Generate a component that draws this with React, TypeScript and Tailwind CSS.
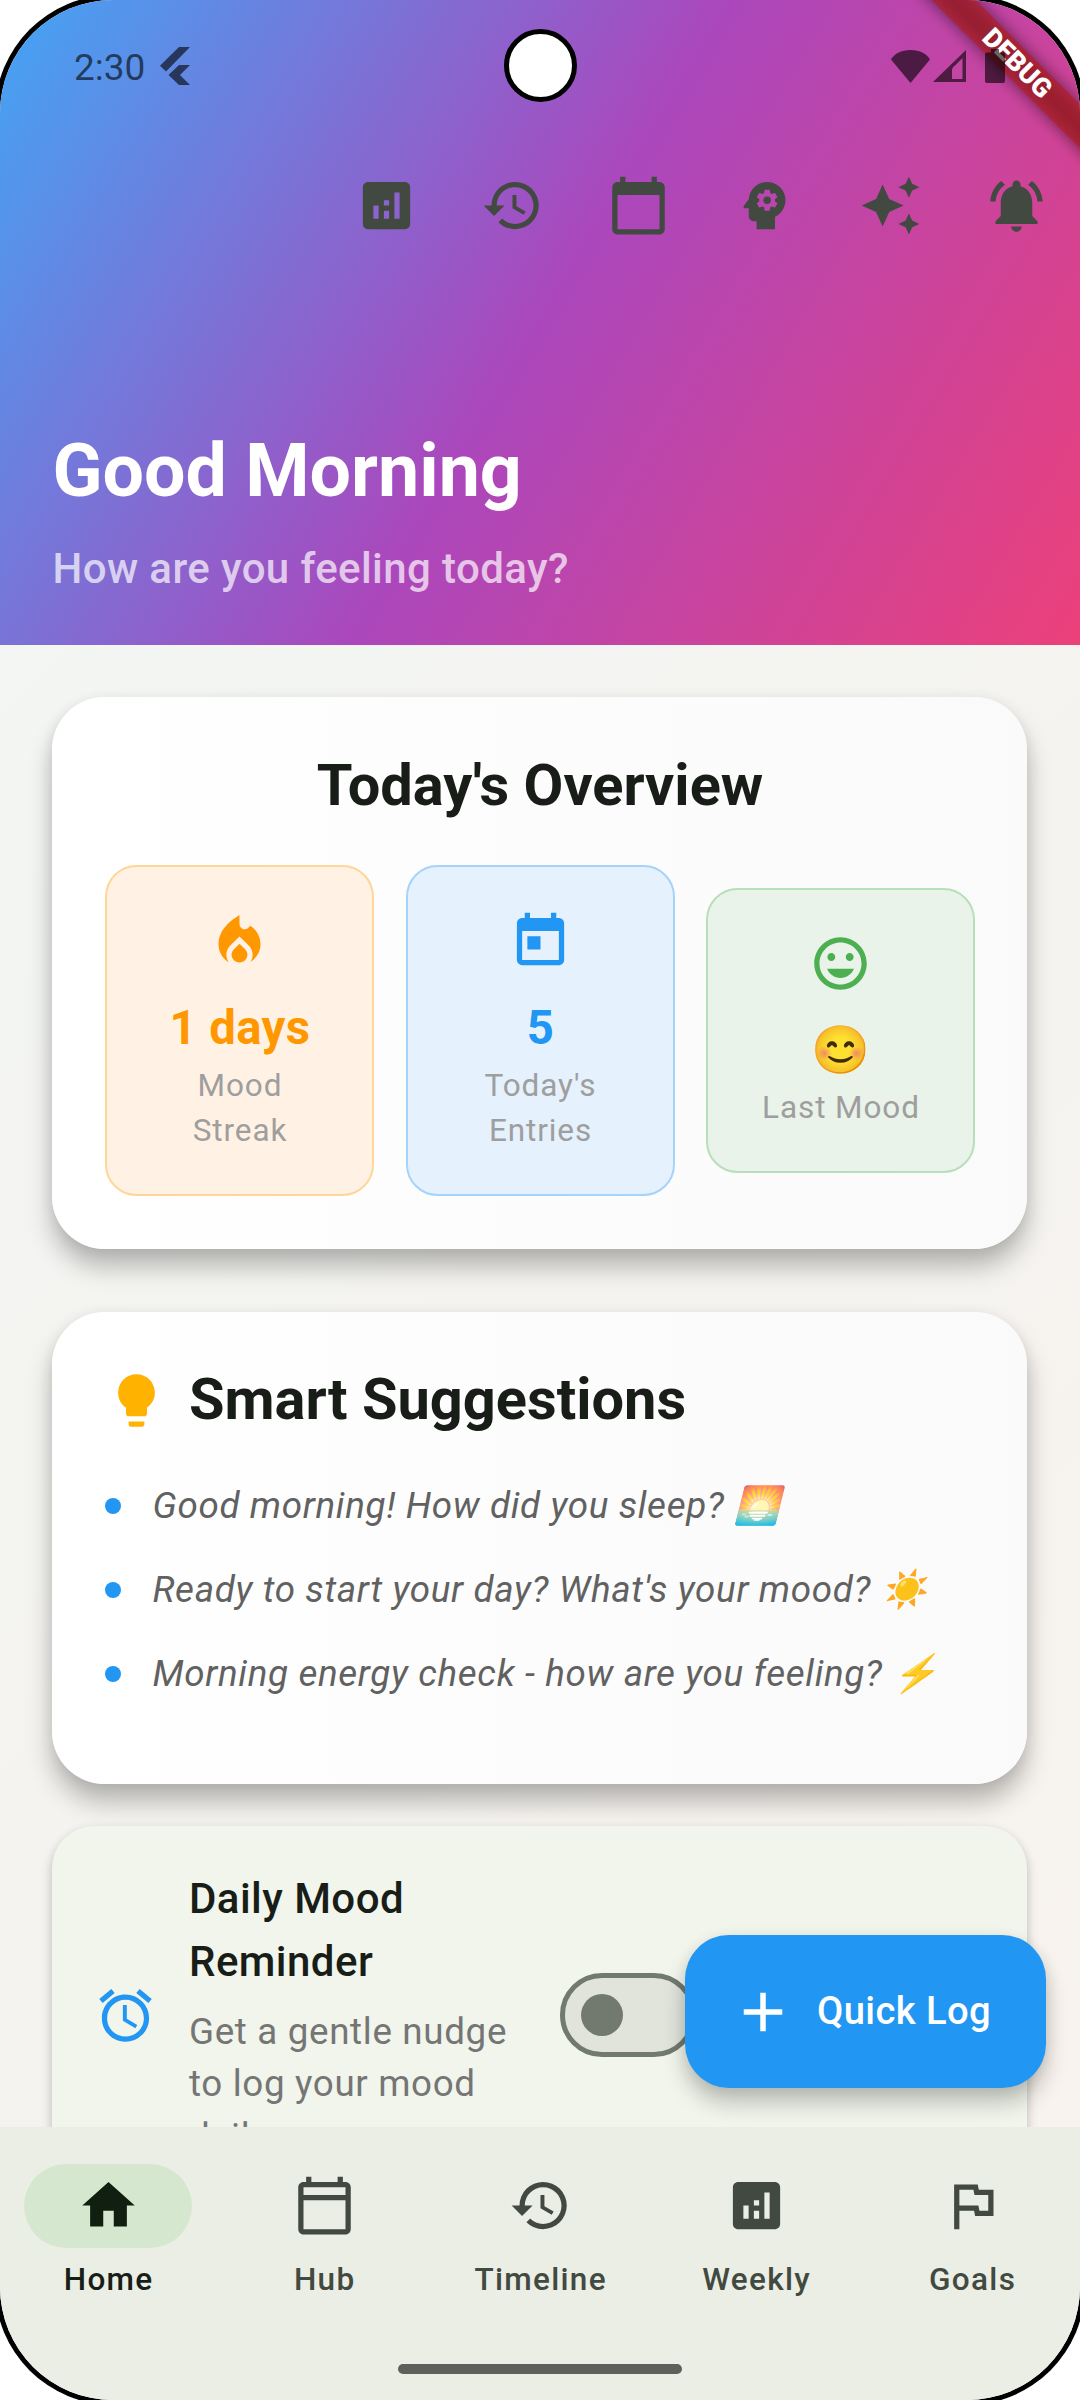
import React from "react";
import {
  MdAdd,
  MdAlarm,
  MdAnalytics,
  MdAutoAwesome,
  MdCalendarToday,
  MdHistory,
  MdHome,
  MdLightbulb,
  MdLocalFireDepartment,
  MdMood,
  MdNotificationsActive,
  MdOutlineCalendarToday,
  MdOutlineFlag,
  MdPsychology,
  MdToday,
} from "react-icons/md";

function StatusBar() {
  return (
    <div className="relative z-20 flex h-[132px] items-center pr-[75px] pl-[74px] text-black/60">
      <span className="pt-[2px] text-[37px] leading-none">2:30</span>
      <svg className="ml-[15px] h-[38px] w-[30px]" viewBox="0 0 30 38" fill="currentColor">
        <path d="M19 0h11L6 24.5 0 18.8z" />
        <path d="M19 18h11l-10 10 10 10H19L8.500 28z" />
      </svg>
      <svg className="ml-auto h-[33px] w-[39px]" viewBox="0 0 39 33" fill="currentColor">
        <path d="M19.500 33L0 9.500C3 4 10 0 19.500 0S36 4 39 9.500z" />
      </svg>
      <svg className="ml-[3px] h-[32px] w-[33px]" viewBox="0 0 33 32" fill="currentColor" fillRule="evenodd">
        <path d="M33 0v32H0zM29.500 8L22 15.500c-2 1.500-3 2.500-3 5V29h10.500z" />
      </svg>
      <svg className="ml-[19px] h-[34px] w-[20px]" viewBox="0 0 20 34" fill="currentColor">
        <path d="M6 0h8v3.500h4a2 2 0 0 1 2 2V32a2 2 0 0 1-2 2H2a2 2 0 0 1-2-2V5.500a2 2 0 0 1 2-2h4z" />
      </svg>
    </div>
  );
}

function DebugBanner() {
  return (
    <div className="absolute top-0 right-0 z-10 h-[210px] w-[210px] overflow-hidden">
      <div className="absolute top-[47.500px] left-[17px] h-[31px] w-[260px] rotate-45 bg-black/50 blur-[8px]" />
      <div className="absolute top-[47.500px] left-[17px] flex h-[31px] w-[260px] rotate-45 items-center justify-center bg-[#b71c1c]/[0.63] text-[26.800px] leading-none font-black text-white">
        DEBUG
      </div>
    </div>
  );
}

const actions = [MdAnalytics, MdHistory, MdCalendarToday, MdPsychology, MdAutoAwesome, MdNotificationsActive];

function Header() {
  return (
    <header className="relative flex h-[645px] shrink-0 flex-col bg-[linear-gradient(120.85deg,#42a5f5_0%,#ab47bc_50%,#ec407a_100%)]">
      <DebugBanner />
      <StatusBar />
      <div className="absolute top-[29px] left-[503.500px] z-20 h-[73px] w-[73px] rounded-full border-[5px] border-black bg-white" />
      <div className="flex h-[147px] items-center justify-end pr-[0.500px] text-[63px] text-[#424940]">
        {actions.map((Icon, i) => (
          <div key={i} className="flex w-[126px] justify-center">
            <Icon />
          </div>
        ))}
      </div>
      <div className="flex flex-1 flex-col justify-end gap-[26px] pb-[46px] pl-[52.500px]">
        <h1 className="text-[73.500px] leading-[84px] font-bold text-white">Good Morning</h1>
        <p className="text-[42px] leading-[60px] font-medium tracking-[0.4px] text-white/70">How are you feeling today?</p>
      </div>
    </header>
  );
}

type StatProps = { icon: React.ReactNode; value: string; label: React.ReactNode; tone: string };

function Stat({ icon, value, label, tone }: StatProps) {
  return (
    <div className={`flex flex-1 flex-col items-center rounded-[31.500px] border-[2.625px] pt-[42.500px] pb-[41px] ${tone}`}>
      <div className="text-[63px]">{icon}</div>
      <div className="mt-[22px] pl-[1px] text-[47.250px] leading-[67.500px] font-bold tracking-[0.400px] whitespace-nowrap">{value}</div>
      <div className="mt-[0.500px] pl-[1px] text-center text-[31.500px] leading-[45px] tracking-[0.900px] whitespace-nowrap text-[#9e9e9e]">{label}</div>
    </div>
  );
}

const cardClass =
  "shrink-0 rounded-[52.500px] bg-linear-to-r from-white to-[#fafafa] pr-[52px] pl-[53px] shadow-[0_18px_24px_rgba(0,0,0,0.25),0_2px_14px_rgba(0,0,0,0.07)]";

function Overview() {
  return (
    <section className={`mt-[52px] h-[552px] pt-[51.500px] ${cardClass}`}>
      <h2 className="text-center text-[57.750px] leading-[72px] font-bold text-[#181d18]">Today's Overview</h2>
      <div className="mt-[44.500px] flex items-center gap-[31.500px]">
        <Stat
          icon={<MdLocalFireDepartment />}
          value="1 days"
          label={<>Mood<br />Streak</>}
          tone="border-[#ffd699] bg-[#fff2e4] text-[#ff9800]"
        />
        <Stat
          icon={<MdToday />}
          value="5"
          label={<>Today's<br />Entries</>}
          tone="border-[#a6d3fa] bg-[#e5f1fc] text-[#2196f3]"
        />
        <Stat icon={<MdMood />} value="😊" label="Last Mood" tone="border-[#b7dfb9] bg-[#e9f3e9] text-[#4caf50]" />
      </div>
    </section>
  );
}

const suggestions = [
  "Good morning! How did you sleep? 🌅",
  "Ready to start your day? What's your mood? ☀️",
  "Morning energy check - how are you feeling? ⚡",
];

function Suggestions() {
  return (
    <section className={`mt-[63px] h-[472px] pt-[52.500px] ${cardClass}`}>
      <div className="flex h-[72px] items-center gap-[21px]">
        <MdLightbulb className="text-[63px] text-[#ffb300]" />
        <h2 className="-mt-[3px] text-[57.750px] leading-[72px] font-bold text-[#181d18]">Smart Suggestions</h2>
      </div>
      <ul className="mt-[43px] flex flex-col gap-[31.500px]">
        {suggestions.map((text) => (
          <li key={text} className="flex h-[52.500px] items-center gap-[31.500px]">
            <span className="h-[16px] w-[16px] rounded-full bg-[#2196f3]" />
            <span className="pt-[1.500px] text-[36.750px] leading-[52.500px] tracking-[0.660px] whitespace-nowrap text-[#616161] italic">{text}</span>
          </li>
        ))}
      </ul>
    </section>
  );
}

function Reminder() {
  return (
    <section className="mt-[42px] flex h-[378px] shrink-0 items-center rounded-[42px] bg-[#f1f5eb] px-[42px] shadow-[0_6px_12px_rgba(0,0,0,0.20),0_1px_8px_rgba(0,0,0,0.05)]">
      <MdAlarm className="text-[63px] text-[#2196f3]" />
      <div className="ml-[32px] w-[370.500px]">
        <h3 className="text-[42px] leading-[63px] font-medium tracking-[0.450px] text-[#181d18]">
          Daily Mood
          <br />
          Reminder
        </h3>
        <p className="mt-[12.500px] text-[36.750px] leading-[52.500px] tracking-[0.660px] text-[#757575]">
          Get a gentle nudge
          <br />
          to log your mood
          <br />
          daily
        </p>
      </div>
      <div className="flex h-[84px] w-[136.500px] items-center rounded-full border-[5px] border-[#72796f] bg-[#e0e4da] pl-[16px]">
        <span className="h-[42px] w-[42px] rounded-full bg-[#72796f]" />
      </div>
    </section>
  );
}

const tabs = [
  { label: "Home", Icon: MdHome, active: true },
  { label: "Hub", Icon: MdOutlineCalendarToday, active: false },
  { label: "Timeline", Icon: MdHistory, active: false },
  { label: "Weekly", Icon: MdAnalytics, active: false },
  { label: "Goals", Icon: MdOutlineFlag, active: false },
];

function BottomNav() {
  return (
    <nav className="relative flex h-[273px] shrink-0 flex-col items-center bg-[#ebeee5]">
      <div className="flex w-full pt-[37px]">
        {tabs.map(({ label, Icon, active }) => (
          <div key={label} className="flex flex-1 flex-col items-center">
            <div
              className={
                active
                  ? "flex h-[84px] w-[168px] items-center justify-center rounded-full bg-[#d5e8cf] pb-[1px] text-[63px] text-[#101f10]"
                  : "flex h-[84px] w-[168px] items-center justify-center pb-[1px] text-[63px] text-[#424940]"
              }
            >
              <Icon />
            </div>
            <span
              className={
                active
                  ? "mt-[10.500px] pl-[1.300px] text-[31.500px] leading-[42px] font-medium tracking-[1.310px] text-[#181d18]"
                  : "mt-[10.500px] pl-[1.300px] text-[31.500px] leading-[42px] font-medium tracking-[1.310px] text-[#424940]"
              }
            >
              {label}
            </span>
          </div>
        ))}
      </div>
      <div className="mt-auto mb-[26px] h-[10px] w-[284px] rounded-full bg-[#5e605b]" />
    </nav>
  );
}

export default function App() {
  return (
    <div className="h-[2400px] w-[1080px] overflow-hidden bg-white font-['Roboto',sans-serif]">
      <div className="flex h-full flex-col overflow-hidden rounded-[113px] shadow-[0_0_0_5px_#000]">
        <Header />
        <main className="relative flex h-[1482px] shrink-0 flex-col overflow-hidden bg-[linear-gradient(135deg,#f3f6f3_0%,#f4f3f0_45%,#f8f3ee_100%)] pr-[53px] pl-[52px]">
          <Overview />
          <Suggestions />
          <Reminder />
          <button className="absolute top-[1290px] left-[685px] flex h-[153px] w-[361px] items-center rounded-[44px] bg-[#2196f3] pl-[44.500px] text-white shadow-[0_15px_22px_rgba(0,0,0,0.22),0_2px_14px_rgba(0,0,0,0.08)]">
            <MdAdd className="text-[66px]" />
            <span className="ml-[21.500px] text-[38.200px] font-medium tracking-[0.400px]">Quick Log</span>
          </button>
        </main>
        <BottomNav />
      </div>
    </div>
  );
}
